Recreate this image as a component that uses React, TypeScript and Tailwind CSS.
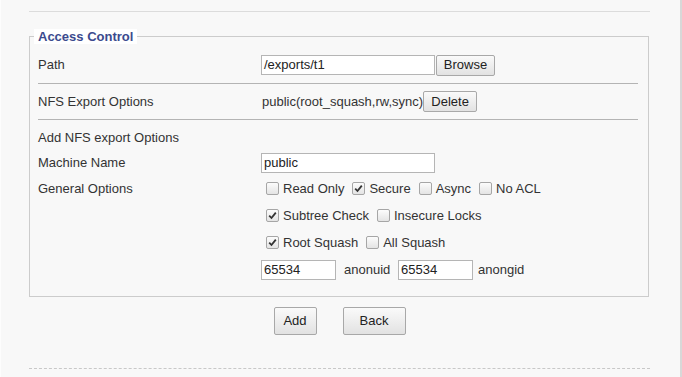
import * as React from 'react';

const Check = ({ on }: { on?: boolean }) => (
  <span className="flex h-[13px] w-[13px] items-center justify-center rounded-[2px] border border-[#a6a6a6] bg-gradient-to-b from-[#fcfcfc] to-[#e4e4e4]">
    {on && (
      <svg width="9" height="9" viewBox="0 0 9 9">
        <path d="M1.2 4.6 L3.5 7 L7.8 1.6" fill="none" stroke="#333" strokeWidth="1.8" />
      </svg>
    )}
  </span>
);

const Opt = ({ label, on }: { label: string; on?: boolean }) => (
  <span className="mr-[8px] flex items-center gap-[4px]">
    <Check on={on} />
    {label}
  </span>
);

const Btn = ({ children, className = '' }: { children: React.ReactNode; className?: string }) => (
  <button
    className={`flex items-center justify-center rounded-[2px] border border-[#a8a8a8] bg-gradient-to-b from-[#fafafa] to-[#e2e2e2] text-[13px] text-[#222] ${className}`}
  >
    {children}
  </button>
);

const Field = ({ value, className = '' }: { value: string; className?: string }) => (
  <div className={`flex h-[20px] items-center border border-[#b5b5b5] bg-white pl-[2px] text-[13px] text-[#222] ${className}`}>
    {value}
  </div>
);

export default function App() {
  return (
    <div
      className="h-[377px] w-[682px] overflow-hidden border-r-2 border-l border-r-[#d8d8d8] border-l-[#fdfdfd] bg-[#f8f8f8] pl-[28px] pr-[30px] text-[13px] text-[#333]"
      style={{ fontFamily: '"Liberation Sans", Arial, sans-serif' }}
    >
      <div className="mt-[11px] h-px w-[621px] bg-[#dcdcdc]" />
      <fieldset className="mt-[17px] w-[620px] border border-[#cccccc] pb-[12px] pl-[8px] pr-[10px]">
        <legend className="ml-[-4px] bg-white px-[4px] text-[13px] font-bold leading-[15px] text-[#3b4a8e]">
          Access Control
        </legend>
        <div className="flex h-[40px] items-center border-b border-[#b4b4b4] pt-[3px]">
          <span className="w-[223px]">Path</span>
          <Field value="/exports/t1" className="w-[174px]" />
          <Btn className="ml-px h-[21px] w-[59px]">Browse</Btn>
        </div>
        <div className="flex h-[36px] items-center border-b border-[#b4b4b4]">
          <span className="w-[224px]">NFS Export Options</span>
          <span>public(root_squash,rw,sync)</span>
          <Btn className="h-[21px] w-[54px]">Delete</Btn>
        </div>
        <div className="flex h-[33px] items-center pt-[2px]">Add NFS export Options</div>
        <div className="flex h-[20px] items-center">
          <span className="w-[223px]">Machine Name</span>
          <Field value="public" className="w-[174px]" />
        </div>
        <div className="mt-[2px] flex">
          <span className="flex h-[27px] w-[228px] items-center">General Options</span>
          <div className="flex flex-col">
            <div className="flex h-[27px] items-center">
              <Opt label="Read Only" />
              <Opt label="Secure" on />
              <Opt label="Async" />
              <Opt label="No ACL" />
            </div>
            <div className="flex h-[27px] items-center">
              <Opt label="Subtree Check" on />
              <Opt label="Insecure Locks" />
            </div>
            <div className="flex h-[27px] items-center">
              <Opt label="Root Squash" on />
              <Opt label="All Squash" />
            </div>
          </div>
        </div>
        <div className="flex h-[28px] items-center pl-[223px]">
          <Field value="65534" className="w-[75px]" />
          <span className="ml-[8px] w-[54px]">anonuid</span>
          <Field value="65534" className="w-[75px]" />
          <span className="ml-[5px]">anongid</span>
        </div>
      </fieldset>
      <div className="mt-[10px] flex w-[621px] justify-center gap-[26px]">
        <Btn className="h-[28px] w-[43px]">Add</Btn>
        <Btn className="h-[28px] w-[63px]">Back</Btn>
      </div>
      <div className="mt-[33px] h-0 w-[621px] border-t border-dashed border-[#c8c8c8]" />
    </div>
  );
}
